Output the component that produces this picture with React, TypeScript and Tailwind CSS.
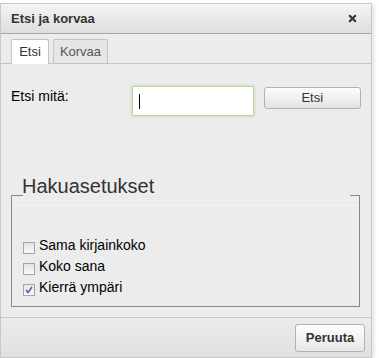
import { X } from 'lucide-react'

function Check({ checked, label }: { checked?: boolean; label: string }) {
  return (
    <label className="flex items-center h-[21px]">
      <span className="w-[12px] h-[12px] mt-[5px] mr-[4px] border border-[#a5a5a5] bg-gradient-to-b from-[#e4e4e4] to-[#fafafa] flex items-center justify-center">
        {checked && (
          <svg width="8" height="8" viewBox="0 0 8 8">
            <path d="M1 4 L3 6.5 L7 1" stroke="#4a5a9a" strokeWidth="1.4" fill="none" />
          </svg>
        )}
      </span>
      <span className="text-[14px] text-black">{label}</span>
    </label>
  )
}

export default function App() {
  return (
    <div className="w-[379px] h-[358px] bg-white pt-[3px] font-['Liberation_Sans',Arial,sans-serif]">
      <div className="w-[372px] h-[355px] border border-[#c9c9c9] bg-[#ececec] flex flex-col shadow-[2px_2px_4px_rgba(0,0,0,0.12)]">
        <div className="h-[30px] shrink-0 flex items-center justify-between px-[10px] border-b border-[#a8a8a8] bg-gradient-to-b from-[#f4f4f4] to-[#dedede]">
          <span className="text-[13px] font-bold text-[#333]">Etsi ja korvaa</span>
          <X size={11} strokeWidth={4.5} className="text-[#333] mr-[3px]" />
        </div>

        <div className="h-[30px] shrink-0 flex items-end gap-[4px] px-[10px] border-b border-[#c4c4c4]">
          <div className="h-[25px] w-[38px] -mb-px bg-white border border-b-0 border-[#c4c4c4] rounded-t-[2px] flex items-center justify-center text-[13px] text-[#333]">
            Etsi
          </div>
          <div className="h-[24px] w-[55px] bg-[#e6e6e6] border border-b-0 border-[#c4c4c4] rounded-t-[2px] flex items-center justify-center text-[13px] text-[#555]">
            Korvaa
          </div>
        </div>

        <div className="flex-1 px-[10px] pt-[22px]">
          <div className="flex items-start">
            <span className="w-[122px] mt-0 text-[14px] text-black">Etsi mitä:</span>
            <div className="w-[122px] h-[30px] border border-[#b9d79a] bg-white shadow-[0_0_3px_rgba(140,190,90,0.5)] flex items-center pl-[6px]">
              <span className="w-px h-[15px] bg-black" />
            </div>
            <button className="ml-[10px] mt-px w-[98px] h-[22px] border border-[#b1b1b1] rounded-[3px] bg-gradient-to-b from-[#fdfdfd] to-[#e3e3e3] text-[13px] text-[#333]">
              Etsi
            </button>
          </div>

          <div className="mt-[59px] mr-[1px]">
            <div className="pl-[11px] text-[20px] leading-[22px] text-[#333]">Hakuasetukset</div>
            <div className="-mt-[2px] border-x border-b border-[#888] pb-[8px]">
              <div className="flex">
                <div className="w-[11px] border-t border-[#888]" />
                <div className="flex-1" />
                <div className="w-[9px] border-t border-[#888]" />
              </div>
              <div className="mt-[9px] h-px bg-[#f4f4f4]" />
              <div className="pt-[29px] pl-[11px]">
                <Check label="Sama kirjainkoko" />
                <Check label="Koko sana" />
                <Check checked label="Kierrä ympäri" />
              </div>
            </div>
          </div>
        </div>

        <div className="h-[40px] shrink-0 border-t border-[#c9c9c9] bg-gradient-to-b from-[#ececec] to-[#e0e0e0] flex items-center justify-end pr-[6px]">
          <button className="w-[70px] h-[28px] border border-[#b1b1b1] rounded-[3px] bg-gradient-to-b from-[#fdfdfd] to-[#e8e8e8] text-[13px] font-bold text-[#333]">
            Peruuta
          </button>
        </div>
      </div>
    </div>
  )
}
